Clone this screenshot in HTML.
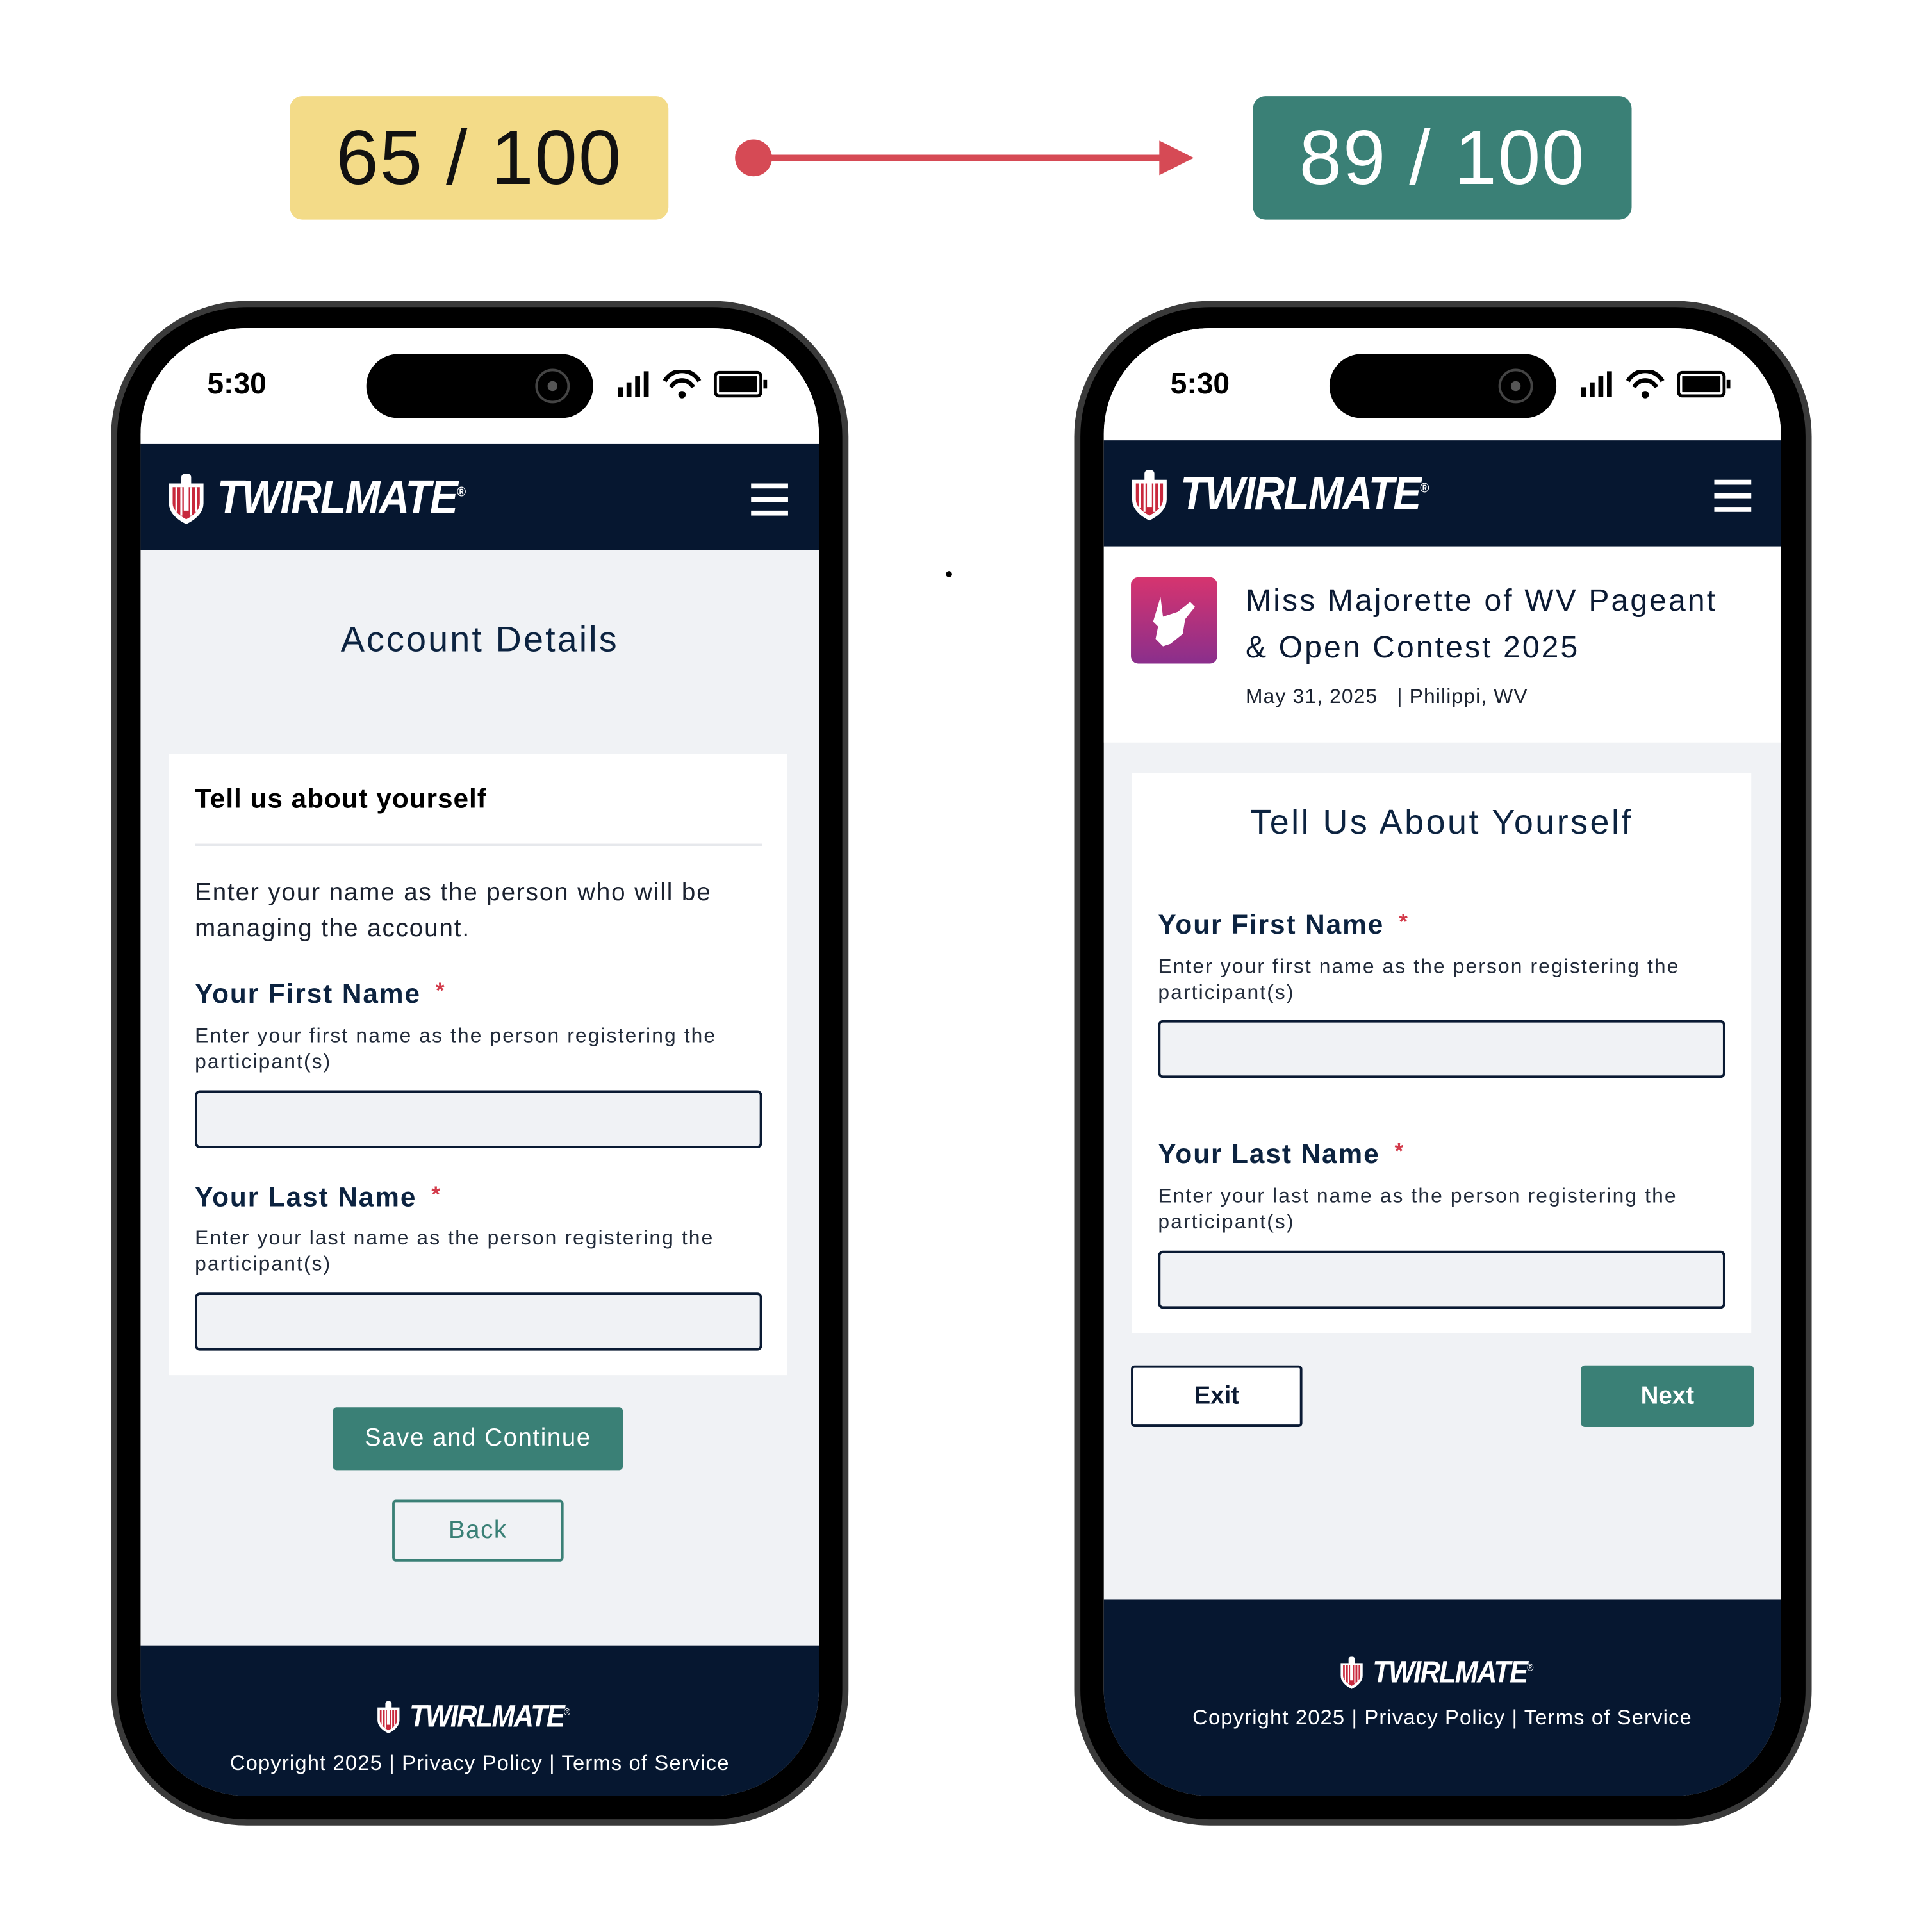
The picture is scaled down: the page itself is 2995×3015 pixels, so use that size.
<!DOCTYPE html>
<html><head><meta charset="utf-8">
<style>
*{margin:0;padding:0;box-sizing:border-box}
html,body{width:2995px;height:3015px;overflow:hidden;background:#fff}
#root{position:absolute;left:0;top:0;width:1556px;height:1566px;transform:scale(1.9248);transform-origin:0 0;font-family:"Liberation Sans",sans-serif;color:#0b1a33}
.abs{position:absolute}
.badge{position:absolute;top:78px;height:100px;width:307px;border-radius:10px;font-size:62px;display:flex;align-items:center;justify-content:center;letter-spacing:1px}
.phone{position:absolute;top:244px;width:598px;height:1236px;border-radius:110px;background:#000;border:5px solid #3a3a3a}
.screen{position:absolute;left:19px;top:17px;width:550px;height:1190px;border-radius:86px;overflow:hidden;background:#f0f2f5}
.t{position:absolute;white-space:nowrap}
.lbl{font-size:22px;color:#0c2340;font-weight:600;letter-spacing:1px}
.lbl span{color:#d33a4a;font-size:18px;margin-left:12px;vertical-align:4px}
.help{font-size:16.5px;line-height:21px;color:#222b3a;white-space:normal;width:470px;letter-spacing:1.1px}
.inp{position:absolute;left:44px;width:460px;height:47px;border:2.5px solid #0a1a33;background:#f0f2f5;border-radius:4px}
.logo{position:absolute;display:flex;align-items:center;color:#fff;font-weight:900;font-style:italic;letter-spacing:-1px;transform-origin:left center}
.ham{position:absolute;width:30px}
.ham i{display:block;height:4px;background:#fff;margin-bottom:7px}
.copy{letter-spacing:0.6px}
</style></head><body><div id="root">

<div class="badge" style="left:235px;background:#f3db88;color:#111">65 / 100</div>
<div class="badge" style="left:1016px;background:#3a8076;color:#fff">89 / 100</div>
<svg class="abs" style="left:590px;top:108px" width="390" height="40"><circle cx="21" cy="20" r="15" fill="#d64a55"/><line x1="21" y1="20" x2="352" y2="20" stroke="#d64a55" stroke-width="5"/><polygon points="350,6 378,20 350,34" fill="#d64a55"/></svg>
<div class="abs" style="left:767px;top:463px;width:5px;height:5px;border-radius:50%;background:#000"></div>

<!-- LEFT PHONE -->
<div class="phone" style="left:90px">
<div class="screen">
 <div class="abs" style="left:0;top:0;width:550px;height:94px;background:#fff"></div>
 <div class="t" style="left:54px;top:32px;font-size:24px;font-weight:600;color:#000">5:30</div>
 <div class="abs" style="left:183px;top:21px;width:184px;height:52px;border-radius:26px;background:#000"><div class="abs" style="left:137px;top:12px;width:28px;height:28px;border-radius:50%;border:2px solid #444"><div class="abs" style="left:8px;top:8px;width:8px;height:8px;border-radius:50%;background:#555"></div></div></div>
 <svg class="abs" style="left:385px;top:34px" width="125" height="24"><rect x="2" y="14" width="4" height="8" fill="#000"/><rect x="9" y="10" width="4" height="12" fill="#000"/><rect x="16" y="5" width="4" height="17" fill="#000"/><rect x="23" y="1" width="4" height="21" fill="#000"/><path d="M40 9 A16 16 0 0 1 68 9" stroke="#000" stroke-width="3.5" fill="none"/><path d="M45 14 A10 10 0 0 1 63 14" stroke="#000" stroke-width="3.5" fill="none"/><circle cx="54" cy="20" r="3" fill="#000"/><rect x="81" y="2" width="37" height="19" rx="3" stroke="#000" stroke-width="2.5" fill="none"/><rect x="84" y="5" width="31" height="13" fill="#000"/><rect x="120" y="8" width="3" height="7" fill="#000"/></svg>
 <div class="abs" style="left:0;top:94px;width:550px;height:86px;background:#061730"></div>
 <div class="logo" style="left:20px;top:116px;height:44px">
  <svg width="34" height="44" viewBox="0 0 34 44"><path d="M3 10 L31 10 L31 26 Q31 36 17 43 Q3 36 3 26Z" fill="#fff"/><path d="M6 13 L28 13 L28 26 Q28 33 17 39 Q6 33 6 26Z" fill="#c8283c"/><path d="M9 13v20M13 13v23M21 13v23M25 13v20" stroke="#fff" stroke-width="1.6"/><rect x="13" y="2" width="8" height="11" rx="3" fill="#fff"/><rect x="15" y="12" width="4" height="20" fill="#fff"/></svg>
  <span style="font-size:38px;margin-left:8px;transform:scaleX(0.9);transform-origin:left;display:inline-block">TWIRLMATE<sup style="font-size:11px;font-style:normal">®</sup></span>
 </div>
 <div class="ham" style="left:495px;top:126px"><i></i><i></i><i></i></div>
 <div class="t" style="left:0;width:550px;text-align:center;top:237px;font-size:29px;letter-spacing:1.6px;color:#0c2340">Account Details</div>
 <div class="abs" style="left:23px;top:345px;width:501px;height:504px;background:#fff"></div>
 <div class="t" style="left:44px;top:369px;font-size:22px;font-weight:600;color:#000;letter-spacing:0.5px">Tell us about yourself</div>
 <div class="abs" style="left:44px;top:418px;width:460px;height:2px;background:#e6e8ec"></div>
 <div class="t" style="left:44px;top:444px;font-size:20px;line-height:29px;white-space:normal;width:470px;color:#1b2230;letter-spacing:1px">Enter your name as the person who will be managing the account.</div>
 <div class="t lbl" style="left:44px;top:527px">Your First Name<span>*</span></div>
 <div class="t help" style="left:44px;top:564px">Enter your first name as the person registering the participant(s)</div>
 <div class="inp" style="top:618px"></div>
 <div class="t lbl" style="left:44px;top:692px">Your Last Name<span>*</span></div>
 <div class="t help" style="left:44px;top:728px">Enter your last name as the person registering the participant(s)</div>
 <div class="inp" style="top:782px"></div>
 <div class="abs" style="left:156px;top:875px;width:235px;height:51px;background:#3a8076;border-radius:3px;color:#fff;font-size:20px;letter-spacing:0.8px;display:flex;align-items:center;justify-content:center">Save and Continue</div>
 <div class="abs" style="left:204px;top:950px;width:139px;height:50px;border:2.5px solid #3a8076;border-radius:3px;color:#3a8076;font-size:20px;letter-spacing:0.8px;display:flex;align-items:center;justify-content:center">Back</div>
 <div class="abs" style="left:0;top:1068px;width:550px;height:122px;background:#061730"></div>
 <div class="logo" style="left:190px;top:1112px;height:28px">
  <svg width="22" height="28" viewBox="0 0 34 44"><path d="M3 10 L31 10 L31 26 Q31 36 17 43 Q3 36 3 26Z" fill="#fff"/><path d="M6 13 L28 13 L28 26 Q28 33 17 39 Q6 33 6 26Z" fill="#c8283c"/><path d="M9 13v20M13 13v23M21 13v23M25 13v20" stroke="#fff" stroke-width="1.6"/><rect x="13" y="2" width="8" height="11" rx="3" fill="#fff"/><rect x="15" y="12" width="4" height="20" fill="#fff"/></svg>
  <span style="font-size:25px;margin-left:6px;transform:scaleX(0.9);transform-origin:left;display:inline-block">TWIRLMATE<sup style="font-size:8px;font-style:normal">®</sup></span>
 </div>
 <div class="t copy" style="left:0;width:550px;text-align:center;top:1154px;font-size:17px;color:#fff">Copyright 2025 | Privacy Policy | Terms of Service</div>
</div></div>

<!-- RIGHT PHONE -->
<div class="phone" style="left:871px">
<div class="screen" style="width:549px">
 <div class="abs" style="left:0;top:0;width:549px;height:91px;background:#fff"></div>
 <div class="t" style="left:54px;top:32px;font-size:24px;font-weight:600;color:#000">5:30</div>
 <div class="abs" style="left:183px;top:21px;width:184px;height:52px;border-radius:26px;background:#000"><div class="abs" style="left:137px;top:12px;width:28px;height:28px;border-radius:50%;border:2px solid #444"><div class="abs" style="left:8px;top:8px;width:8px;height:8px;border-radius:50%;background:#555"></div></div></div>
 <svg class="abs" style="left:385px;top:34px" width="125" height="24"><rect x="2" y="14" width="4" height="8" fill="#000"/><rect x="9" y="10" width="4" height="12" fill="#000"/><rect x="16" y="5" width="4" height="17" fill="#000"/><rect x="23" y="1" width="4" height="21" fill="#000"/><path d="M40 9 A16 16 0 0 1 68 9" stroke="#000" stroke-width="3.5" fill="none"/><path d="M45 14 A10 10 0 0 1 63 14" stroke="#000" stroke-width="3.5" fill="none"/><circle cx="54" cy="20" r="3" fill="#000"/><rect x="81" y="2" width="37" height="19" rx="3" stroke="#000" stroke-width="2.5" fill="none"/><rect x="84" y="5" width="31" height="13" fill="#000"/><rect x="120" y="8" width="3" height="7" fill="#000"/></svg>
 <div class="abs" style="left:0;top:91px;width:549px;height:86px;background:#061730"></div>
 <div class="logo" style="left:20px;top:113px;height:44px">
  <svg width="34" height="44" viewBox="0 0 34 44"><path d="M3 10 L31 10 L31 26 Q31 36 17 43 Q3 36 3 26Z" fill="#fff"/><path d="M6 13 L28 13 L28 26 Q28 33 17 39 Q6 33 6 26Z" fill="#c8283c"/><path d="M9 13v20M13 13v23M21 13v23M25 13v20" stroke="#fff" stroke-width="1.6"/><rect x="13" y="2" width="8" height="11" rx="3" fill="#fff"/><rect x="15" y="12" width="4" height="20" fill="#fff"/></svg>
  <span style="font-size:38px;margin-left:8px;transform:scaleX(0.9);transform-origin:left;display:inline-block">TWIRLMATE<sup style="font-size:11px;font-style:normal">®</sup></span>
 </div>
 <div class="ham" style="left:495px;top:123px"><i></i><i></i><i></i></div>
 <div class="abs" style="left:0;top:177px;width:549px;height:159px;background:#fff"></div>
 <div class="abs" style="left:22px;top:202px;width:70px;height:70px;border-radius:6px;background:linear-gradient(#d6346f,#8a2f8c)">
  <svg width="70" height="70"><path d="M24 16 L26 32 L38 28 L48 20 L52 24 L44 34 L42 46 L32 54 L26 56 L20 50 L22 40 L18 36 Z" fill="#fff"/></svg>
 </div>
 <div class="t" style="left:115px;top:202px;font-size:25px;line-height:38px;letter-spacing:1.6px;color:#0b1a33">Miss Majorette of WV Pageant<br>&amp; Open Contest 2025</div>
 <div class="t" style="left:115px;top:290px;font-size:16.5px;color:#1b2230;letter-spacing:0.6px">May 31, 2025 &nbsp;&nbsp;| Philippi, WV</div>
 <div class="abs" style="left:23px;top:361px;width:502px;height:454px;background:#fff"></div>
 <div class="t" style="left:23px;width:502px;text-align:center;top:385px;font-size:28px;letter-spacing:1.8px;color:#0c2340">Tell Us About Yourself</div>
 <div class="t lbl" style="left:44px;top:471px">Your First Name<span>*</span></div>
 <div class="t help" style="left:44px;top:508px">Enter your first name as the person registering the participant(s)</div>
 <div class="inp" style="top:561px"></div>
 <div class="t lbl" style="left:44px;top:657px">Your Last Name<span>*</span></div>
 <div class="t help" style="left:44px;top:694px">Enter your last name as the person registering the participant(s)</div>
 <div class="inp" style="top:748px"></div>
 <div class="abs" style="left:22px;top:841px;width:139px;height:50px;border:2.5px solid #0a1a33;border-radius:3px;background:#fff;color:#0b1a33;font-size:20px;font-weight:600;display:flex;align-items:center;justify-content:center">Exit</div>
 <div class="abs" style="left:387px;top:841px;width:140px;height:50px;background:#3a8076;border-radius:3px;color:#fff;font-size:20px;font-weight:600;display:flex;align-items:center;justify-content:center">Next</div>
 <div class="abs" style="left:0;top:1031px;width:549px;height:159px;background:#061730"></div>
 <div class="logo" style="left:190px;top:1076px;height:28px">
  <svg width="22" height="28" viewBox="0 0 34 44"><path d="M3 10 L31 10 L31 26 Q31 36 17 43 Q3 36 3 26Z" fill="#fff"/><path d="M6 13 L28 13 L28 26 Q28 33 17 39 Q6 33 6 26Z" fill="#c8283c"/><path d="M9 13v20M13 13v23M21 13v23M25 13v20" stroke="#fff" stroke-width="1.6"/><rect x="13" y="2" width="8" height="11" rx="3" fill="#fff"/><rect x="15" y="12" width="4" height="20" fill="#fff"/></svg>
  <span style="font-size:25px;margin-left:6px;transform:scaleX(0.9);transform-origin:left;display:inline-block">TWIRLMATE<sup style="font-size:8px;font-style:normal">®</sup></span>
 </div>
 <div class="t copy" style="left:0;width:549px;text-align:center;top:1117px;font-size:17px;color:#fff">Copyright 2025 | Privacy Policy | Terms of Service</div>
</div></div>

</div></body></html>
